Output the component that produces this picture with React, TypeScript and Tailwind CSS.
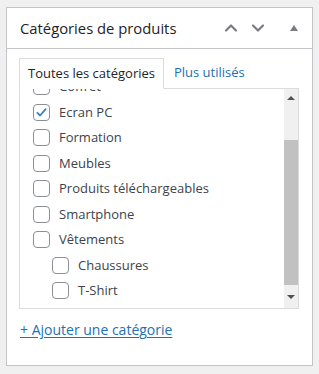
import { ChevronUp, ChevronDown } from "lucide-react";

const rows = [
  { name: "Coffret", level: 0, checked: false },
  { name: "Ecran PC", level: 0, checked: true },
  { name: "Formation", level: 0, checked: false },
  { name: "Meubles", level: 0, checked: false },
  { name: "Produits téléchargeables", level: 0, checked: false },
  { name: "Smartphone", level: 0, checked: false },
  { name: "Vêtements", level: 0, checked: false },
  { name: "Chaussures", level: 1, checked: false },
  { name: "T-Shirt", level: 1, checked: false },
];

function Checkbox({ checked }: { checked: boolean }) {
  return (
    <span className="flex h-[17px] w-[17px] shrink-0 items-center justify-center rounded-[4px] border border-[#8c8f94] bg-white">
      {checked && (
        <svg viewBox="0 0 20 20" className="h-[15px] w-[15px]">
          <path d="M4.5 10.5 L8.2 14 L15.5 5.5" fill="none" stroke="#3582c4" strokeWidth="2.4" strokeLinecap="round" strokeLinejoin="round" />
        </svg>
      )}
    </span>
  );
}

export default function App() {
  return (
    <div className="min-h-[374px] bg-[#f0f0f1] pl-[6px] pt-[7px]" style={{ fontFamily: '"Open Sans", "Noto Sans", sans-serif' }}>
      <div className="h-[359px] w-[307px] border border-[#c3c4c7] bg-white">
        {/* header */}
        <div className="flex h-[41px] items-center border-b border-[#c3c4c7] pl-[13px] pr-[14px]">
          <h2 className="flex-1 text-[14.8px] text-[#1d2327]">Catégories de produits</h2>
          <ChevronUp className="h-5 w-5 text-[#787c82]" strokeWidth={2.6} />
          <ChevronDown className="ml-[7px] h-5 w-5 text-[#787c82]" strokeWidth={2.6} />
          <span className="ml-[22px] h-0 w-0 border-x-[4px] border-b-[6px] border-x-transparent border-b-[#787c82]" />
        </div>

        <div className="px-[12px] pt-[9px]">
          {/* tabs */}
          <div className="flex text-[13px]">
            <div className="relative z-10 -mb-px flex h-[31px] items-center border border-b-white border-[#dcdcde] bg-white px-[8px] text-[#1d2327]">
              Toutes les catégories
            </div>
            <div className="flex h-[30px] items-center px-[10px] text-[#2271b1]">Plus utilisés</div>
          </div>

          {/* list */}
          <div className="flex h-[221px] w-[280px] border border-[#dcdcde] bg-white">
            <div className="flex-1 overflow-hidden">
              <div className="-mt-[15px] pl-[13px]">
                {rows.map((r) => (
                  <div
                    key={r.name}
                    className={`flex h-[25.5px] items-center gap-[9px] text-[13px] ${r.level ? "pl-[19px]" : ""}`}
                  >
                    <Checkbox checked={r.checked} />
                    <span className="text-[#3c434a]">{r.name}</span>
                  </div>
                ))}
              </div>
            </div>
            {/* scrollbar */}
            <div className="flex w-[14px] flex-col bg-[#f0f0f0]">
              <div className="flex h-[17px] items-center justify-center">
                <span className="h-0 w-0 border-x-[4px] border-b-[4px] border-x-transparent border-b-[#505050]" />
              </div>
              <div className="mt-[34px] h-[145px] w-[14px] bg-[#c1c1c1]" />
              <div className="flex flex-1 items-center justify-center">
                <span className="h-0 w-0 border-x-[4px] border-t-[4px] border-x-transparent border-t-[#505050]" />
              </div>
            </div>
          </div>

          <div className="pl-px pt-[10px] leading-[20px]">
            <a className="text-[14px] text-[#2271b1] underline underline-offset-2">+ Ajouter une catégorie</a>
          </div>
        </div>
      </div>
    </div>
  );
}
